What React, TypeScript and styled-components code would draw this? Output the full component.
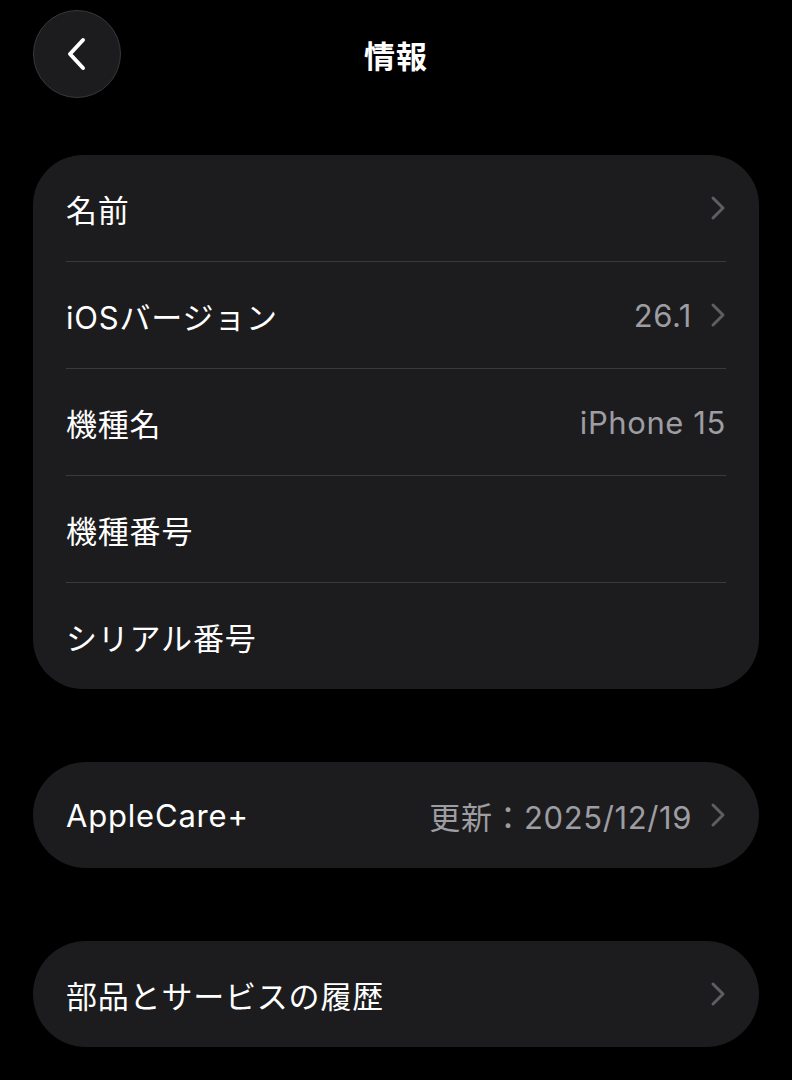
import styled, { createGlobalStyle } from 'styled-components'

const GlobalStyle = createGlobalStyle`
    html, body {
        margin: 0;
        padding: 0;
        background: #000;
    }
    body {
        font-family: "Inter", "Noto Sans CJK JP", sans-serif;
        color: #fff;
    }
`

const Page = styled.div`
    width: 792px;
    min-height: 1080px;
    background: #000;
    padding: 10px 33px 0;
    box-sizing: border-box;
`

const Header = styled.header`
    height: 88px;
    display: grid;
    grid-template-columns: 88px 1fr 88px;
    align-items: center;
    margin-bottom: 57px;
`

const BackButton = styled.button`
    width: 88px;
    height: 88px;
    border-radius: 50%;
    background: #1c1c1e;
    border: 1.5px solid #38383a;
    display: flex;
    align-items: center;
    justify-content: center;
    padding: 0;
`

const Title = styled.h1`
    margin: 0;
    text-align: center;
    font-size: 31px;
    font-weight: 700;
    letter-spacing: 1px;
`

const Card = styled.section<{ $pill?: boolean }>`
    background: #1c1c1e;
    border-radius: ${(p) => (p.$pill ? '53px' : '50px')};
    padding: 0 33px;
    margin-bottom: 73px;
`

const Row = styled.div<{ $last?: boolean }>`
    height: 106px;
    display: flex;
    align-items: center;
    justify-content: space-between;
    border-bottom: ${(p) => (p.$last ? 'none' : '1.5px solid #3a3a3c')};
`

const Label = styled.span`
    font-size: 31px;
    color: #fff;
    letter-spacing: 0.8px;
`

const Right = styled.div`
    display: flex;
    align-items: center;
    gap: 18px;
`

const Value = styled.span`
    font-size: 31px;
    color: #9d9da2;
    letter-spacing: 0.6px;
`

const Chevron = () => (
    <svg width="16" height="26" viewBox="0 0 16 26">
        <path d="M3 3 L13 13 L3 23" fill="none" stroke="#5e5e62" strokeWidth="3" strokeLinecap="round" strokeLinejoin="round" />
    </svg>
)

type Item = { label: string; value?: string; chevron?: boolean }

const info: Item[] = [
    { label: '名前', chevron: true },
    { label: 'iOSバージョン', value: '26.1', chevron: true },
    { label: '機種名', value: 'iPhone 15' },
    { label: '機種番号' },
    { label: 'シリアル番号' },
]

const App = () => {
    return (
        <>
            <GlobalStyle />
            <Page>
                <Header>
                    <BackButton>
                        <svg width="30" height="40" viewBox="0 0 30 40">
                            <path d="M21 6 L8 20 L21 34" fill="none" stroke="#fff" strokeWidth="4" strokeLinecap="round" strokeLinejoin="round" />
                        </svg>
                    </BackButton>
                    <Title>情報</Title>
                    <div />
                </Header>

                <Card>
                    {info.map((item, i) => (
                        <Row key={i} $last={i === info.length - 1}>
                            <Label>{item.label}</Label>
                            <Right>
                                {item.value && <Value>{item.value}</Value>}
                                {item.chevron && <Chevron />}
                            </Right>
                        </Row>
                    ))}
                </Card>

                <Card $pill>
                    <Row $last>
                        <Label>AppleCare+</Label>
                        <Right>
                            <Value>更新：2025/12/19</Value>
                            <Chevron />
                        </Right>
                    </Row>
                </Card>

                <Card $pill>
                    <Row $last>
                        <Label>部品とサービスの履歴</Label>
                        <Right>
                            <Chevron />
                        </Right>
                    </Row>
                </Card>
            </Page>
        </>
    )
}

export default App
